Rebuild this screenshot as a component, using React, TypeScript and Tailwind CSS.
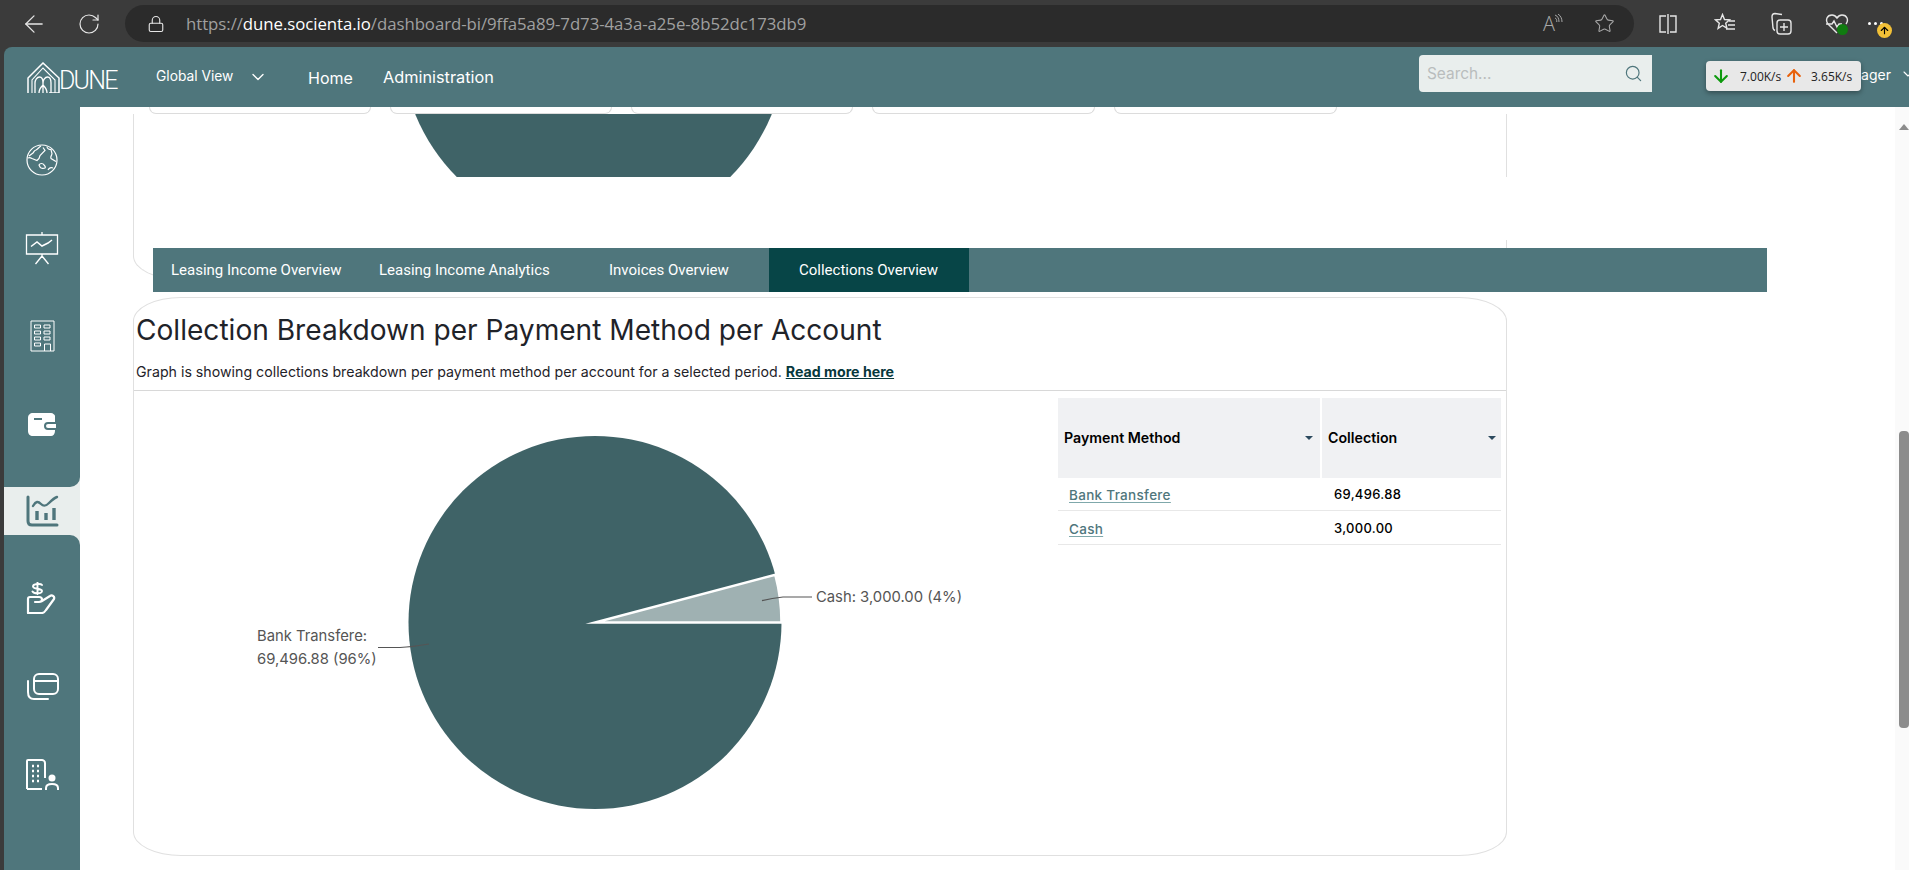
import { ArrowDown, ArrowLeft, ArrowUp, ChevronDown, Lock, RotateCw, Search, Star } from 'lucide-react';

const TABS = ['Leasing Income Overview', 'Leasing Income Analytics', 'Invoices Overview'];
const MINI_CARDS = ['w-[222px]', 'w-[222px]', 'w-[222px]', 'w-[223px]', 'w-[223px]'];
const ROWS = [
  { method: 'Bank Transfere', amount: '69,496.88' },
  { method: 'Cash', amount: '3,000.00' },
];

function Logo() {
  return (
    <div className="flex items-end w-[89px] h-[31px]">
      <svg width="34" height="31" viewBox="0 0 34 31" fill="none" stroke="white" strokeWidth="1.5" className="shrink-0">
        <path d="M1 31V16L16 1l16 15v15H22" />
        <path d="M5 31V18L16 6l12 12v13" strokeWidth="1.1" />
        <path d="M8 31V21c0-3 2-6 4.500-6S16 18 16 21v10M16 21c0-3 2-6 4.500-6S24 18 24 21v10M12 31c0-4 2-6 4-8 2 2 4 4 4 8" strokeWidth="1.3" />
      </svg>
      <span className="text-[25px] leading-[25px] font-light tracking-[-1.8px] text-white font-['Roboto',sans-serif] -ml-[2px]">DUNE</span>
    </div>
  );
}

function BrowserBar() {
  return (
    <div className="h-[47px] shrink-0 flex items-center text-[#e6e6e6]">
      <ArrowLeft className="ml-[20px] w-[28px] h-[28px]" strokeWidth={1.1} />
      <RotateCw className="ml-[29px] w-[24px] h-[24px]" strokeWidth={1.2} />
      <div className="ml-[24px] w-[1509px] h-[37px] rounded-full bg-[#2b2b2b] flex items-center">
        <Lock className="ml-[22px] w-[18px] h-[18px]" strokeWidth={1.5} />
        <div className="ml-[21px] text-[16.800px] tracking-[-0.05px] text-[#a0a0a0] font-['Open_Sans',sans-serif] whitespace-nowrap">
          https://<span className="text-white">dune.socienta.io</span>/dashboard-bi/9ffa5a89-7d73-4a3a-a25e-8b52dc173db9
        </div>
        <div className="ml-auto flex items-center text-[#a8a8a8]">
          <div className="flex items-start w-[26px]">
            <span className="text-[20px] leading-[20px] font-light font-['Open_Sans',sans-serif]">A</span>
            <svg width="9" height="12" viewBox="0 0 9 12" fill="none" stroke="currentColor" strokeWidth="1" className="-ml-[1px]">
              <path d="M1 1c3 1 4 4 4 7M1 4c1.500.500 1.800 2 1.800 4M4 0c3 2 4 5 4 8" />
            </svg>
          </div>
          <Star className="ml-[25px] mr-[19px] w-[21px] h-[21px]" strokeWidth={1.2} />
        </div>
      </div>
      {/* browser toolbar icons */}
      <svg className="ml-[24px]" width="20" height="22" viewBox="0 0 20 22" fill="none" stroke="currentColor" strokeWidth="1.4">
        <path d="M8 3H2v16h6M12 3h6v16h-6M10 1v20" />
      </svg>
      <svg className="ml-[36px]" width="22" height="22" viewBox="0 0 22 22" fill="none" stroke="currentColor" strokeWidth="1.4">
        <path d="M8.500 1.500l2 5 5 .4-3.800 3.300 1.200 5-4.400-2.700-4.400 2.900 1.200-5.200L1.500 6.900l5-.4zM15 8h6M14 12h7M12 16h9" />
      </svg>
      <svg className="ml-[34px]" width="22" height="24" viewBox="0 0 22 24" fill="none" stroke="currentColor" strokeWidth="1.4">
        <path d="M12 2.500L5 1.500C3 1.500 2 3 2 5l1 11c.2 1 1 2 2 2.500" />
        <rect x="7" y="8" width="14" height="14" rx="3" />
        <path d="M14 11v8M10 15h8" />
      </svg>
      <div className="ml-[33px] relative w-[24px] h-[22px]">
        <svg width="24" height="22" viewBox="0 0 24 22" fill="none" stroke="currentColor" strokeWidth="1.4">
          <path d="M12 20L3 11C0 7 2 2 7 2c2.500 0 4 1.500 5 3 1-1.500 2.500-3 5-3 5 0 7 5 4 9" />
          <path d="M1 11h6l2-3 3 6 2-3h3" />
        </svg>
        <div className="absolute left-[12px] top-[11px] w-[11px] h-[11px] rounded-full bg-[#107c10]" />
      </div>
      <div className="ml-[19px] relative flex gap-[3px] items-center self-center -mt-[1px]">
        <div className="w-[3px] h-[3px] rounded-full bg-white" />
        <div className="w-[3px] h-[3px] rounded-full bg-white" />
        <div className="w-[3px] h-[3px] rounded-full bg-white" />
        <div className="absolute left-[9px] top-[1px] w-[15px] h-[15px] rounded-full bg-[#f2c037] flex items-center justify-center">
          <ArrowUp className="w-[11px] h-[11px] text-black" strokeWidth={2.5} />
        </div>
      </div>
    </div>
  );
}

function Header() {
  return (
    <div className="h-[60px] shrink-0 flex items-center text-white font-['Inter',sans-serif]">
      <div className="ml-[23px]"><Logo /></div>
      <div className="ml-[40px] w-[152px] flex items-center -mt-[1px]">
        <span className="text-[13.800px] font-normal">Global View</span>
        <ChevronDown className="ml-[15px] w-[20px] h-[20px]" strokeWidth={1.6} />
      </div>
      <span className="w-[75px] text-[16px] mt-[1px]">Home</span>
      <span className="text-[16.300px] mt-[1px]">Administration</span>
      <div className="flex-1" />
      <div className="w-[233px] h-[37px] -mt-[7px] bg-[#e9eeed] rounded-l-[4px] flex items-center pl-[8px] pr-[9px]">
        <span className="text-[15.400px] text-[#b9bdbd]">Search...</span>
        <Search className="ml-auto w-[19px] h-[19px] text-[#4f767c]" strokeWidth={1.5} />
      </div>
      <div className="w-[257px] flex items-center justify-end -mt-[6px] overflow-hidden">
        <span className="text-[14px]">Manager</span>
        <ChevronDown className="ml-[9px] -mr-[7px] w-[16px] h-[16px] shrink-0" strokeWidth={1.6} />
      </div>
    </div>
  );
}

function SideIcon({ children }: { children: React.ReactNode }) {
  return <div className="h-[88px] flex items-center justify-center text-white">{children}</div>;
}

function Sidebar() {
  return (
    <div className="w-[76px] shrink-0 bg-[#e9eeed] flex flex-col">
      <div className="h-[380px] pt-[9px] bg-[#4f767c] rounded-br-[10px]">
        <SideIcon>
          <svg width="32" height="32" viewBox="0 0 32 32" fill="none" stroke="currentColor" strokeWidth="1.2">
            <circle cx="16" cy="16" r="15" />
            <path d="M15 2c-2 1-3 3-5 4-2 .500-2 2-3 3l-4 3M2 14c2-1 3 0 4 .500l5 2 2-2 1-3 5-5-2-3M21 2.500c0 2 2 3 4 3l1 4c0 2-2 3-1 5l5 3M13 21c1-2 4-2 5 0 1 1 2 2 1 3-2 1-5 0-5-1zM27 24c-2-1-4 0-5 2" />
          </svg>
        </SideIcon>
        <SideIcon>
          <svg width="34" height="34" viewBox="0 0 34 34" fill="none" stroke="currentColor" strokeWidth="1.3">
            <path d="M17 1v3M1.500 4h31v19h-31zM17 23v4M17 25l-6.500 8M17 25l6.500 8" />
            <path d="M6 15.500l6-4.500 5 4 6-3 4-3" strokeWidth="1.5" />
          </svg>
        </SideIcon>
        <SideIcon>
          <svg width="25" height="32" viewBox="0 0 25 32" fill="none" stroke="currentColor" strokeWidth="1">
            <path d="M1 1h23v30H1z" />
            <path d="M4.500 5h6v3h-6zM14 5h6v3h-6zM4.500 11h6v3h-6zM14 11h6v3h-6zM4.500 17h6v3h-6zM14 17h6v3h-6zM4.500 23h6v3h-6zM14.500 31v-7h6v7" />
          </svg>
        </SideIcon>
        <SideIcon>
          <svg width="28" height="23" viewBox="0 0 28 23" fill="currentColor">
            <path fillRule="evenodd" d="M5 0h18c2 0 4 2 4 3v6h-7a4 4 0 0 0 0 8h7v1c0 3-2 5-4 5H5c-3 0-5-2-5-5V5c0-3 2-5 5-5zm1 5v2h8V5zm14 6h8v4h-8a2 2 0 0 1 0-4z" />
          </svg>
        </SideIcon>
      </div>
      <div className="h-[48px] flex items-center justify-center text-[#4f767c]">
        <svg width="33" height="32" viewBox="0 0 33 32" fill="none" stroke="currentColor" strokeWidth="3" strokeLinecap="round" strokeLinejoin="round">
          <path d="M2 2v24c0 2.500 1.500 4 4 4h25" />
          <path d="M7 11c3-5 5-5 8-2s5 2 8-1 5-5 8-6" strokeWidth="2.400" />
          <path d="M11 25v-9M20 25v-7M28 25v-12" strokeWidth="3.400" strokeLinecap="butt" />
        </svg>
      </div>
      <div className="flex-1 pt-[19px] bg-[#4f767c] rounded-tr-[10px]">
        <SideIcon>
          <svg width="32" height="32" viewBox="0 0 32 32" fill="none" stroke="currentColor" strokeWidth="2.200" strokeLinecap="round" strokeLinejoin="round">
            <path d="M2 31V17c0-1 1-2 2-2h9c2 0 3 1 3 2.500S15 20 13 20H9M16 19l8-5c2-1.500 5 .500 4 3l-8 11c-1 1.500-2 3-4 3H2" />
            <path d="M16 3c-1-1.500-9-1.500-9 1.500S16 6 16 9s-8 3-9.500 .500M11.500 0v12" strokeWidth="1.900" />
          </svg>
        </SideIcon>
        <SideIcon>
          <svg width="33" height="27" viewBox="0 0 33 27" fill="none" stroke="currentColor" strokeWidth="2" strokeLinecap="round">
            <rect x="8" y="1" width="24" height="20" rx="5" />
            <path d="M8 8h24M2 8v11c0 4 2 7 6 7h14" />
          </svg>
        </SideIcon>
        <SideIcon>
          <svg width="33" height="31" viewBox="0 0 33 31" fill="none" stroke="currentColor" strokeWidth="2">
            <path d="M1 30V2c0-.500.500-1 1-1h14c1 0 3 1 3 3v15M1 30h15" />
            <path d="M6 7h2M11 7h2M6 12h2M11 12h2M6 17h2M11 17h2M6 22h2M11 22h2" strokeWidth="2.400" />
            <circle cx="26" cy="19" r="3.500" fill="currentColor" stroke="none" />
            <path d="M20 31v-2c0-3 2-4 6-4s6 1 6 4v2" />
          </svg>
        </SideIcon>
      </div>
    </div>
  );
}

function TopCard() {
  return (
    <>
      <div className="h-[7px] flex gap-[19px] pl-[69px]">
        {MINI_CARDS.map((w, i) => (
          <div key={i} className={`${w} h-[7px] border-x border-b border-[#dcdcdc] rounded-b-[8px]`} />
        ))}
      </div>
      <div className="ml-[53px] w-[1374px] h-[166px] border-l border-b border-[#e0e0e0] rounded-bl-[48px_24px] flex flex-col">
        <div className="h-[63px] shrink-0 border-r border-[#e0e0e0]">
          <svg className="block" width="1372" height="63" viewBox="134 114 1372 63">
            <circle cx="593.500" cy="41.500" r="192.500" fill="#3f6367" />
          </svg>
        </div>
        <div className="h-[63px] shrink-0" />
        <div className="flex-1 border-r border-[#e0e0e0]" />
      </div>
    </>
  );
}

function Tabs() {
  return (
    <div className="relative ml-[73px] w-[1614px] h-[44px] -mt-[32px] bg-[#4f767c] flex items-center text-[15px] text-white font-['Roboto',sans-serif]">
      <div className="w-[208px] h-full flex items-center pl-[18px] pt-[1px]">{TABS[0]}</div>
      <div className="w-[208px] h-full flex items-center pl-[18px] pt-[1px]">{TABS[1]}</div>
      <div className="w-[200px] h-full flex items-center pl-[40px] pt-[1px]">{TABS[2]}</div>
      <div className="w-[200px] h-full bg-[#074547] flex items-center pl-[30px] pt-[1px]">Collections Overview</div>
    </div>
  );
}

function Chart() {
  return (
    <svg className="block shrink-0 font-['Inter',sans-serif]" width="924" height="464" viewBox="134 391 924 464">
      <circle cx="595" cy="622.500" r="186.500" fill="#3f6367" />
      <path d="M595 622.500L781.500 622.500A186.500 186.500 0 0 0 775.300 574.800Z" fill="#9fb1b2" stroke="white" strokeWidth="2.500" strokeLinejoin="miter" strokeMiterlimit="10" />
      <path d="M762 600.700Q772 598 783 597H812" fill="none" stroke="#555" strokeWidth="1.200" />
      <path d="M429 644Q412 647 400 647.500H378" fill="none" stroke="#555" strokeWidth="1.200" />
      <g fill="#555555" fontSize="14.800">
        <text x="816" y="602">Cash: 3,000.00 (4%)</text>
        <text x="257" y="641">Bank Transfere:</text>
        <text x="257" y="664">69,496.88 (96%)</text>
      </g>
    </svg>
  );
}

function PaymentTable() {
  return (
    <div className="w-[443px] mt-[7px] text-black">
      <div className="flex h-[80px] bg-[#f0f1f3] text-[14.200px] font-semibold">
        <div className="w-[264px] flex items-center pl-[6px] pr-[7px] border-r-2 border-white">
          <span>Payment Method</span>
          <div className="ml-auto w-0 h-0 border-x-[4px] border-x-transparent border-t-[4px] border-t-[#2c4a5e]" />
        </div>
        <div className="flex-1 flex items-center pl-[6px] pr-[5px]">
          <span>Collection</span>
          <div className="ml-auto w-0 h-0 border-x-[4px] border-x-transparent border-t-[4px] border-t-[#2c4a5e]" />
        </div>
      </div>
      {ROWS.map((row, i) => (
        <div key={row.method} className={`flex items-center border-b border-[#e8e8e8] text-[13px] font-medium tracking-[0.3px] ${i === 0 ? 'h-[33px] pt-[2px]' : 'h-[34px] pt-[3px]'}`}>
          <a className="w-[264px] pl-[11px] text-[13.500px] text-[#4f767c] underline decoration-[#7fa8ab] underline-offset-2">{row.method}</a>
          <span className="pl-[12px]">{row.amount}</span>
        </div>
      ))}
    </div>
  );
}

function BreakdownCard() {
  return (
    <div className="ml-[53px] mt-[5px] w-[1374px] h-[559px] border border-[#e0e0e0] rounded-[48px/24px] flex flex-col overflow-hidden font-['Inter',sans-serif]">
      <h1 className="pl-[2px] pt-[14px] h-[58px] text-[28.100px] leading-[36px] text-[#1f2329] font-normal whitespace-nowrap">
        Collection Breakdown per Payment Method per Account
      </h1>
      <p className="pl-[2px] pt-[6px] h-[34px] text-[14.200px] leading-[20px] text-[#1f2329] whitespace-nowrap">
        Graph is showing collections breakdown per payment method per account for a selected period.{' '}
        <a className="font-bold text-[#07383c] underline">Read more here</a>
      </p>
      <div className="flex border-t border-[#d8d8d8] flex-1">
        <Chart />
        <PaymentTable />
      </div>
    </div>
  );
}

function Scrollbar() {
  return (
    <div className="w-[14px] shrink-0 bg-[#fafafa] flex flex-col items-end">
      <div className="mt-[17px] w-0 h-0 border-x-[5px] border-x-transparent border-b-[6px] border-b-[#8c8c8c]" />
      <div className="mt-[301px] w-[10px] h-[297px] rounded-[4px] bg-[#8c8c8c]" />
    </div>
  );
}

export default function App() {
  return (
    <div className="relative w-[1909px] h-[870px] overflow-hidden bg-[#3b3b3b] flex flex-col">
      <BrowserBar />
      <div className="ml-[4px] flex-1 min-h-0 bg-[#4f767c] rounded-tl-[8px] flex flex-col">
        <Header />
        <div className="flex-1 min-h-0 flex">
          <Sidebar />
          <div className="flex-1 min-w-0 bg-white flex">
            <div className="flex-1 min-w-0">
              <TopCard />
              <Tabs />
              <BreakdownCard />
            </div>
            <Scrollbar />
          </div>
        </div>
      </div>

      {/* network speed widget floats over the page */}
      <div className="absolute left-[1706px] top-[61px] w-[155px] h-[30px] rounded-[4px] bg-[#e8e8e8] shadow-[0_2px_5px_rgba(0,0,0,0.35)] flex items-center text-[12px] text-[#222] font-['Open_Sans',sans-serif]">
        <ArrowDown className="ml-[5px] w-[20px] h-[20px] text-[#0e9a0e]" strokeWidth={2.5} />
        <span className="ml-[9px] mt-[2px] w-[43px]">7.00K/s</span>
        <ArrowUp className="ml-[1px] w-[20px] h-[20px] text-[#e8610c]" strokeWidth={2.5} />
        <span className="ml-[7px] mt-[2px]">3.65K/s</span>
      </div>
    </div>
  );
}
